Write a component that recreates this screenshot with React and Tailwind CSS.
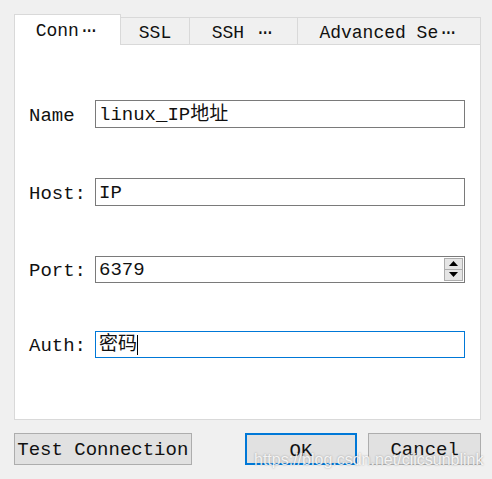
import React from 'react';

const mono = "font-['Liberation_Mono','Noto_Sans_CJK_SC',monospace]";

const Dots = () => <span className="tracking-[-6px] pr-[6px]">···</span>;

const Tab = ({ children, active, className = '' }) => (
  <div
    className={`flex items-center justify-center border border-[#d9d9d9] text-[18px] text-[#111] whitespace-pre ${
      active ? 'h-[31px] bg-white border-b-0 relative z-10 -mb-px pt-[3px]' : 'h-[27px] bg-[#f0f0f0] border-l-0 border-b-0 pt-[5px]'
    } ${className}`}
  >
    {children}
  </div>
);

const Row = ({ label, children, className = '' }) => (
  <div className={`flex items-center h-[28px] ${className}`}>
    <div className="w-[66px] pt-[4px] leading-[24px] text-[19px] text-[#111]">{label}</div>
    <div className="flex-1">{children}</div>
  </div>
);

const field = 'border flex items-center text-[19px] leading-[24px] text-[#111] pt-[2px]';

const App = () => {
  return (
    <div className={`relative w-[492px] h-[479px] bg-[#f0f0f0] ${mono}`}>
      <div className="pt-[14px] pl-[14px] pr-[11px]">
        {/* tabs */}
        <div className="flex items-end">
          <Tab active className="w-[107px]">Conn<Dots /></Tab>
          <Tab className="w-[69px]">SSL</Tab>
          <Tab className="w-[108px]">SSH <Dots /></Tab>
          <Tab className="w-[183px]">Advanced Se<Dots /></Tab>
        </div>

        {/* panel */}
        <div className="h-[376px] bg-white border border-[#d9d9d9] pt-[55px] pl-[14px] pr-[15px]">
          <Row label="Name">
            <div className={`h-[28px] border-[#7a7a7a] px-[3px] ${field}`}>linux_IP地址</div>
          </Row>
          <Row label="Host:" className="mt-[50px]">
            <div className={`h-[28px] border-[#7a7a7a] px-[3px] ${field}`}>IP</div>
          </Row>
          <Row label="Port:" className="mt-[49px]">
            <div className="h-[27px] border border-[#7a7a7a] flex items-center pl-[3px] pr-px text-[19px] leading-[24px] text-[#111]">
              <span className="flex-1 pt-[2px]">6379</span>
              <div className="flex flex-col w-[19px] h-[23px] border border-[#adadad] bg-[#e5e5e5]">
                <div className="flex-1 flex items-center justify-center border-b border-[#adadad]">
                  <svg width="9" height="5" viewBox="0 0 9 5"><path d="M0 5L4.5 0L9 5Z" fill="#000" /></svg>
                </div>
                <div className="flex-1 flex items-center justify-center">
                  <svg width="9" height="5" viewBox="0 0 9 5"><path d="M0 0L4.5 5L9 0Z" fill="#000" /></svg>
                </div>
              </div>
            </div>
          </Row>
          <Row label="Auth:" className="mt-[47px]">
            <div className={`h-[27px] border-[#0078d7] px-[3px] ${field}`}>
              密码<span className="w-px h-[20px] bg-black" />
            </div>
          </Row>
        </div>

        {/* buttons */}
        <div className="flex mt-[13px] text-[19px] text-[#111]">
          <button className="w-[178px] h-[32px] pt-[2px] bg-[#e1e1e1] border border-[#adadad]">Test Connection</button>
          <button className="w-[113px] h-[32px] pt-[2px] ml-[53px] bg-[#e1e1e1] border-2 border-[#0078d7]">OK</button>
          <button className="w-[113px] h-[32px] pt-[2px] ml-[11px] bg-[#e1e1e1] border border-[#adadad]">Cancel</button>
        </div>
      </div>

      {/* watermark */}
      <div className="absolute left-[254px] top-[450px] text-[16px] leading-[20px] text-white/85 font-['Liberation_Sans',sans-serif] [text-shadow:0_0_2px_rgba(0,0,0,0.35)]">
        https://blog.csdn.net/ciicsunblink
      </div>
    </div>
  );
};

export default App;
